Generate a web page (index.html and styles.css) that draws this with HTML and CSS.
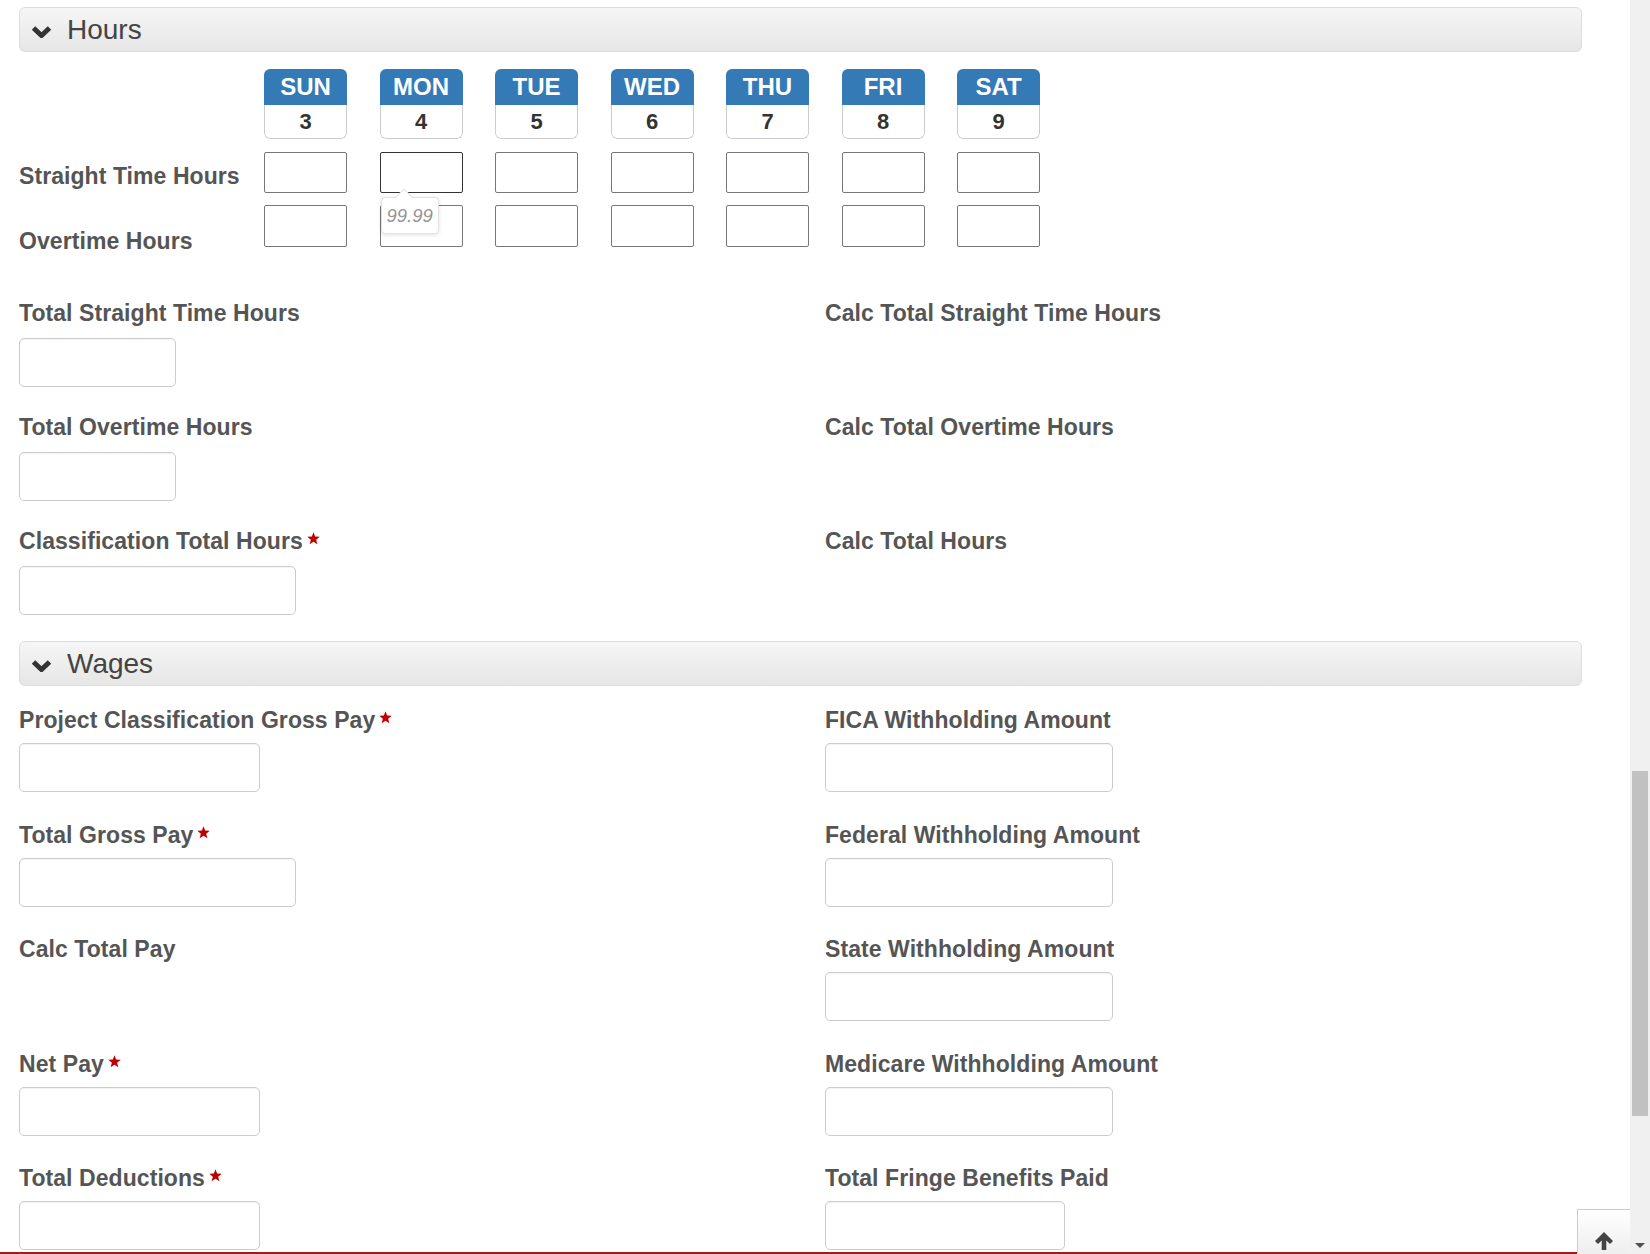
FILE: index.html
```html
<!DOCTYPE html>
<html lang="en">
<head>
    <meta charset="UTF-8">
    <meta name="viewport" content="width=device-width, initial-scale=1.0">
    <link rel="stylesheet" href="styles.css">
</head>
<body>
    <div class="page">
        <main class="content">
            <div class="form-area">
                <!-- Hours -->
                <section class="panel">
                    <div class="panel-heading">
                        <svg class="chevron" width="21" height="12" viewBox="0 0 21 12"><path d="M2.5 2 L10.5 9.5 L18.5 2" /></svg>
                        <span>Hours</span>
                    </div>

                    <div class="week">
                        <div class="week-labels">
                            <label class="week-label">Straight Time Hours</label>
                            <label class="week-label">Overtime Hours</label>
                        </div>
                        <div class="week-grid">
                            <div class="day"><div class="day-name">SUN</div><div class="day-num">3</div></div>
                            <div class="day"><div class="day-name">MON</div><div class="day-num">4</div></div>
                            <div class="day"><div class="day-name">TUE</div><div class="day-num">5</div></div>
                            <div class="day"><div class="day-name">WED</div><div class="day-num">6</div></div>
                            <div class="day"><div class="day-name">THU</div><div class="day-num">7</div></div>
                            <div class="day"><div class="day-name">FRI</div><div class="day-num">8</div></div>
                            <div class="day"><div class="day-name">SAT</div><div class="day-num">9</div></div>

                            <input class="hour-input" type="text">
                            <div class="cell">
                                <input class="hour-input focused" type="text">
                                <div class="hint">99.99</div>
                            </div>
                            <input class="hour-input" type="text">
                            <input class="hour-input" type="text">
                            <input class="hour-input" type="text">
                            <input class="hour-input" type="text">
                            <input class="hour-input" type="text">

                            <input class="hour-input" type="text">
                            <div class="cell"><input class="hour-input" type="text"></div>
                            <input class="hour-input" type="text">
                            <input class="hour-input" type="text">
                            <input class="hour-input" type="text">
                            <input class="hour-input" type="text">
                            <input class="hour-input" type="text">
                        </div>
                    </div>

                    <div class="form-grid hours-grid">
                        <div class="field">
                            <label class="field-label">Total Straight Time Hours</label>
                            <input class="field-input w-sm" type="text">
                        </div>
                        <div class="field">
                            <label class="field-label">Calc Total Straight Time Hours</label>
                        </div>
                        <div class="field">
                            <label class="field-label">Total Overtime Hours</label>
                            <input class="field-input w-sm" type="text">
                        </div>
                        <div class="field">
                            <label class="field-label">Calc Total Overtime Hours</label>
                        </div>
                        <div class="field">
                            <label class="field-label">Classification Total Hours<svg class="req" width="13" height="13" viewBox="0 0 24 24"><path d="M12 0.5 L15 8.4 L23.5 8.8 L16.9 14.1 L19.1 22.5 L12 17.8 L4.9 22.5 L7.1 14.1 L0.5 8.8 L9 8.4 Z" /></svg></label>
                            <input class="field-input w-lg" type="text">
                        </div>
                        <div class="field">
                            <label class="field-label">Calc Total Hours</label>
                        </div>
                    </div>
                </section>

                <!-- Wages -->
                <section class="panel">
                    <div class="panel-heading">
                        <svg class="chevron" width="21" height="12" viewBox="0 0 21 12"><path d="M2.5 2 L10.5 9.5 L18.5 2" /></svg>
                        <span>Wages</span>
                    </div>

                    <div class="form-grid wages-grid">
                        <div class="field">
                            <label class="field-label">Project Classification Gross Pay<svg class="req" width="13" height="13" viewBox="0 0 24 24"><path d="M12 0.5 L15 8.4 L23.5 8.8 L16.9 14.1 L19.1 22.5 L12 17.8 L4.9 22.5 L7.1 14.1 L0.5 8.8 L9 8.4 Z" /></svg></label>
                            <input class="field-input w-md" type="text">
                        </div>
                        <div class="field">
                            <label class="field-label">FICA Withholding Amount</label>
                            <input class="field-input w-xl" type="text">
                        </div>
                        <div class="field">
                            <label class="field-label">Total Gross Pay<svg class="req" width="13" height="13" viewBox="0 0 24 24"><path d="M12 0.5 L15 8.4 L23.5 8.8 L16.9 14.1 L19.1 22.5 L12 17.8 L4.9 22.5 L7.1 14.1 L0.5 8.8 L9 8.4 Z" /></svg></label>
                            <input class="field-input w-lg" type="text">
                        </div>
                        <div class="field">
                            <label class="field-label">Federal Withholding Amount</label>
                            <input class="field-input w-xl" type="text">
                        </div>
                        <div class="field">
                            <label class="field-label">Calc Total Pay</label>
                        </div>
                        <div class="field">
                            <label class="field-label">State Withholding Amount</label>
                            <input class="field-input w-xl" type="text">
                        </div>
                        <div class="field">
                            <label class="field-label">Net Pay<svg class="req" width="13" height="13" viewBox="0 0 24 24"><path d="M12 0.5 L15 8.4 L23.5 8.8 L16.9 14.1 L19.1 22.5 L12 17.8 L4.9 22.5 L7.1 14.1 L0.5 8.8 L9 8.4 Z" /></svg></label>
                            <input class="field-input w-md" type="text">
                        </div>
                        <div class="field">
                            <label class="field-label">Medicare Withholding Amount</label>
                            <input class="field-input w-xl" type="text">
                        </div>
                        <div class="field">
                            <label class="field-label">Total Deductions<svg class="req" width="13" height="13" viewBox="0 0 24 24"><path d="M12 0.5 L15 8.4 L23.5 8.8 L16.9 14.1 L19.1 22.5 L12 17.8 L4.9 22.5 L7.1 14.1 L0.5 8.8 L9 8.4 Z" /></svg></label>
                            <input class="field-input w-md" type="text">
                        </div>
                        <div class="field">
                            <label class="field-label">Total Fringe Benefits Paid</label>
                            <input class="field-input w-md2" type="text">
                        </div>
                    </div>
                </section>
            </div>
            <div class="footer-line"></div>

            <a href="#" class="to-top">
                <svg width="20" height="20" viewBox="0 0 20 20"><path d="M10 1 L19 10 L16 13 L12.3 9.4 L12.3 19 L7.7 19 L7.7 9.4 L4 13 L1 10 Z" /></svg>
            </a>
        </main>

        <div class="scrollbar">
            <div class="scroll-thumb"></div>
            <div class="scroll-arrow"></div>
        </div>
    </div>
</body>
</html>
```

FILE: styles.css
```css
/* Base */
:root {
    --label-text: #555555;
    --day-blue: #337ab7;
    --required: #c00000;
}

html, body {
    margin: 0;
    padding: 0;
    height: 1254px;
    overflow: hidden;
    background: #ffffff;
    font-family: 'Liberation Sans', Arial, sans-serif;
    color: var(--label-text);
}

.page {
    display: flex;
    height: 1254px;
}

.content {
    flex: 1;
    display: flex;
    flex-direction: column;
    position: relative;
    min-width: 0;
}

.form-area {
    flex: 1;
    overflow: hidden;
    padding: 7px 48px 0 19px;
}

.footer-line {
    height: 2px;
    background-color: #9e1c1c;
}

/* Panel headings */
.panel-heading {
    height: 45px;
    box-sizing: border-box;
    display: flex;
    align-items: center;
    padding-left: 11px;
    border: 1px solid #dddddd;
    border-radius: 6px;
    background: linear-gradient(to bottom, #f6f6f6 0%, #e6e6e6 100%);
    color: #444444;
    font-size: 28px;
}

.chevron {
    margin: 4px 15px 0 0;
}

.chevron path {
    fill: none;
    stroke: #333333;
    stroke-width: 5;
}

/* Week grid */
.week {
    display: flex;
    margin-top: 17px;
}

.week-labels {
    width: 245px;
    padding-top: 95px;
}

.week-label {
    display: block;
    font-size: 23px;
    font-weight: bold;
    letter-spacing: 0.07px;
    line-height: 25px;
    white-space: nowrap;
}

.week-label + .week-label {
    margin-top: 40px;
}

.week-grid {
    display: grid;
    grid-template-columns: repeat(7, 83px);
    grid-template-rows: 70px 41px 42px;
    column-gap: 32.5px;
    row-gap: 12.5px;
}

.day {
    border-radius: 6px;
    overflow: hidden;
    text-align: center;
    font-weight: bold;
}

.day-name {
    height: 36px;
    line-height: 36px;
    background-color: var(--day-blue);
    color: #ffffff;
    font-size: 24px;
}

.day-num {
    height: 34px;
    line-height: 33px;
    box-sizing: border-box;
    border: 1px solid #cccccc;
    border-top: none;
    border-radius: 0 0 6px 6px;
    color: #333333;
    font-size: 22px;
}

.cell {
    position: relative;
}

.hour-input {
    display: block;
    width: 83px;
    height: 100%;
    box-sizing: border-box;
    margin: 0;
    border: 1px solid #777777;
    border-radius: 2px;
    background: #ffffff;
}

.hour-input.focused {
    border-color: #333333;
}

.hint {
    position: absolute;
    left: 1px;
    top: 45px;
    z-index: 2;
    padding: 0 5px;
    height: 37px;
    line-height: 36px;
    box-sizing: border-box;
    border: 1px solid #e2e2e2;
    border-radius: 4px;
    background: #ffffff;
    box-shadow: 0 1px 4px rgba(0, 0, 0, 0.12);
    color: #959595;
    font-size: 18.5px;
    font-style: italic;
}

.hint::before {
    content: '';
    position: absolute;
    left: 16px;
    top: -7px;
    width: 11px;
    height: 11px;
    background: #ffffff;
    border-left: 1px solid #e2e2e2;
    border-top: 1px solid #e2e2e2;
    transform: rotate(45deg);
}

/* Form fields */
.form-grid {
    display: grid;
    grid-template-columns: 806px 1fr;
    row-gap: 28px;
}

.hours-grid {
    margin: 47px 0 26px;
}

.wages-grid {
    margin-top: 22px;
    row-gap: 30.5px;
}

.field-label {
    display: block;
    font-size: 23px;
    font-weight: bold;
    letter-spacing: 0.07px;
    line-height: 25px;
    margin-bottom: 12px;
    white-space: nowrap;
}

.wages-grid .field-label {
    margin-bottom: 10px;
}

.req {
    vertical-align: top;
    margin: 3px 0 0 4px;
}

.req path {
    fill: var(--required);
}

.field-input {
    display: block;
    height: 49px;
    box-sizing: border-box;
    margin: 0;
    border: 1px solid #cccccc;
    border-radius: 5px;
    box-shadow: inset 0 1px 1px rgba(0, 0, 0, 0.05);
    background: #ffffff;
}

.w-sm { width: 157px; }
.w-md { width: 241px; }
.w-md2 { width: 240px; }
.w-lg { width: 277px; }
.w-xl { width: 288px; }

/* Back to top */
.to-top {
    position: absolute;
    right: 0;
    top: 1209px;
    width: 53px;
    height: 60px;
    box-sizing: border-box;
    padding-top: 21px;
    text-align: center;
    border: 1px solid #cccccc;
    border-right: none;
    background: linear-gradient(to bottom, #ffffff 0%, #e9e9e9 100%);
}

.to-top path {
    fill: #444444;
}

/* Scrollbar */
.scrollbar {
    width: 20px;
    height: 1254px;
    display: flex;
    flex-direction: column;
    background-color: #f0f0f0;
}

.scroll-thumb {
    margin: 771px 2px 0 2px;
    height: 345px;
    background-color: #c1c1c1;
}

.scroll-arrow {
    margin: auto auto 6px auto;
    width: 0;
    height: 0;
    border-left: 5px solid transparent;
    border-right: 5px solid transparent;
    border-top: 5px solid #505050;
}
```
